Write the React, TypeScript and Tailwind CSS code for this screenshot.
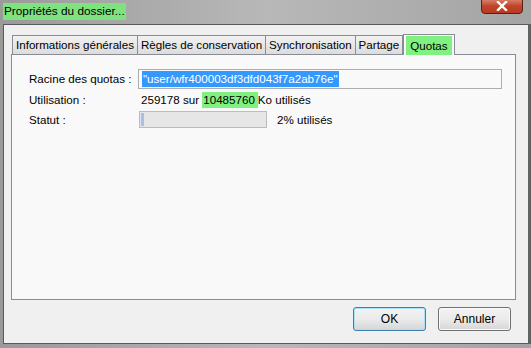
import React from 'react';

const tabs = ['Informations générales', 'Règles de conservation', 'Synchronisation', 'Partage'];

function CloseButton() {
  return (
    <div className="mt-[-2px] mr-[8px] flex h-[16px] w-[42px] items-center justify-center rounded-b-[4px] border border-[#5a1e14] bg-gradient-to-b from-[#d9856f] via-[#c0442a] to-[#b93a20]">
      <svg width="12" height="10" viewBox="0 0 12 10">
        <path d="M2 1 L10 9 M10 1 L2 9" stroke="#ffffff" strokeWidth="2.4" strokeLinecap="square" />
      </svg>
    </div>
  );
}

function Button({ label, focused }: { label: string; focused?: boolean }) {
  return (
    <div
      className={
        'flex h-[24px] w-[73px] items-center justify-center rounded-[3px] border bg-gradient-to-b from-[#f3f3f3] via-[#ebebeb] to-[#d6d6d6] text-[12px] text-black ' +
        (focused ? 'border-[#3c7fb1] shadow-[inset_0_0_0_1px_#a8e1f8]' : 'border-[#707070] shadow-[inset_0_0_0_1px_#fafafa]')
      }
    >
      {label}
    </div>
  );
}

export default function App() {
  return (
    <div
      className="flex h-[348px] w-[531px] flex-col bg-gradient-to-r from-[#9a9a9a] via-[#b8b8b8] to-[#a4a4a4]"
      style={{ fontFamily: '"Liberation Sans", Arial, sans-serif' }}
    >
      {/* title bar */}
      <div className="flex h-[24px] items-start justify-between">
        <div className="ml-[3px] mt-[3px] h-[17px] bg-[#7ee27e] px-[1px] text-[11.8px] leading-[17px] text-black">
          Propriétés du dossier...
        </div>
        <CloseButton />
      </div>

      {/* client area */}
      <div className="mb-[4px] ml-[3px] flex flex-1 flex-col border-b border-l border-t border-r-[3px] border-[#5a5a5a] border-r-[#626262] bg-[#f0f0f0] text-[11.6px] text-black">
        {/* tabs */}
        <div className="ml-[8px] mt-[9px] flex items-end">
          {tabs.map((t) => (
            <div
              key={t}
              className="-mr-px flex h-[19px] items-center border border-b-0 border-[#898c95] bg-gradient-to-b from-[#f2f2f2] to-[#dcdcdc] px-[3px] leading-none"
            >
              {t}
            </div>
          ))}
          <div className="relative z-10 -mb-px ml-[1px] flex h-[21px] items-start border border-b-0 border-[#898c95] bg-[#f9f9f9] px-[2px] pt-[1px]">
            <div className="flex h-[19px] items-center bg-[#80f080] px-[4px] leading-none">Quotas</div>
          </div>
        </div>

        {/* panel */}
        <div className="ml-[7px] mr-[12px] h-[246px] border border-[#898c95] bg-[#f9f9f9] pl-[17px] pr-[13px] pt-[14px]">
          <div className="flex h-[20px] items-center">
            <div className="w-[109px]">Racine des quotas :</div>
            <div className="flex h-[20px] flex-1 items-center border border-[#abadb3] bg-[#f9f9f9] px-[3px]">
              <span className="bg-[#3399ff] px-[1px] leading-[16px] text-white">"user/wfr400003df3dfd043f7a2ab76e"</span>
            </div>
          </div>
          <div className="mt-[2px] h-[17px] leading-[17px]">
            <span className="inline-block w-[112px]">Utilisation :</span>
            <span>259178 sur </span>
            <span className="inline-block bg-[#80f080] pl-[1px] pr-[3px] leading-[16px]">10485760</span>
            <span>Ko utilisés</span>
          </div>
          <div className="mt-[2px] flex h-[19px] items-center">
            <div className="w-[110px]">Statut :</div>
            <div className="flex h-[17px] w-[128px] items-stretch border border-[#bcbcbc] bg-[#e6e6e6] p-[1px]">
              <div className="w-[3px] bg-[#a9bdf2]" />
            </div>
            <div className="ml-[10px]">2% utilisés</div>
          </div>
        </div>

        {/* buttons */}
        <div className="mr-[17px] mt-[7px] flex justify-end gap-[12px]">
          <Button label="OK" focused />
          <Button label="Annuler" />
        </div>
      </div>
    </div>
  );
}
